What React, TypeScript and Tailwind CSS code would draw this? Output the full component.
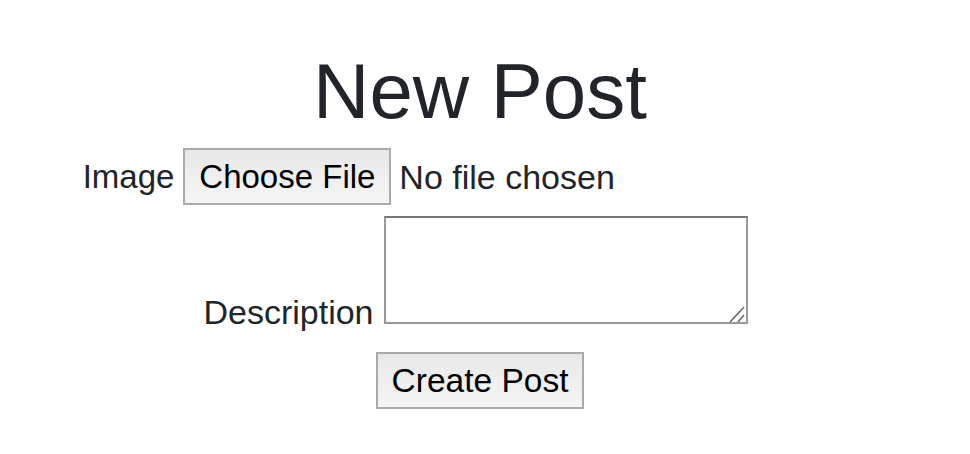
export default function App() {
  return (
    <div
      className="w-[960px] flex flex-col items-center text-[#212529]"
      style={{ fontFamily: '"Liberation Sans", Arial, sans-serif' }}
    >
      <h1 className="mt-[52px] text-[78px] leading-none font-normal">New Post</h1>

      <form className="flex flex-col items-center">
        {/* Image */}
        <div className="mt-[18px] flex items-center h-[57px]">
          <label className="text-[33px] leading-none">Image</label>
          <div className="ml-[9px] w-[694px] flex items-center">
            <button
              type="button"
              className="h-[57px] w-[208px] border-2 border-[#aaa] bg-gradient-to-b from-[#e8e8e8] to-[#f5f5f5] text-black text-[33px] leading-none"
            >
              Choose File
            </button>
            <span className="ml-[8px] text-[34px] leading-none">No file chosen</span>
          </div>
        </div>

        {/* Description */}
        <div className="mt-[11px] flex items-end">
          <label className="text-[34px] leading-none -mb-[5px]">Description</label>
          <div className="relative ml-[10px] mr-[9px]">
            <textarea className="block w-[364px] h-[108px] border-2 border-[#999] border-t-[#777] bg-white resize-none outline-none" />
            <svg
              className="absolute right-0 bottom-0"
              width="20"
              height="20"
              viewBox="0 0 20 20"
            >
              <line x1="2" y1="18" x2="16" y2="3" stroke="#666" strokeWidth="1.5" />
              <line x1="10" y1="18" x2="16" y2="11" stroke="#666" strokeWidth="1.5" />
            </svg>
          </div>
        </div>

        <button
          type="submit"
          className="mt-[28px] h-[57px] w-[208px] border-2 border-[#aaa] bg-gradient-to-b from-[#e8e8e8] to-[#f5f5f5] text-black text-[33.5px] leading-none"
        >
          Create Post
        </button>
      </form>
    </div>
  )
}
